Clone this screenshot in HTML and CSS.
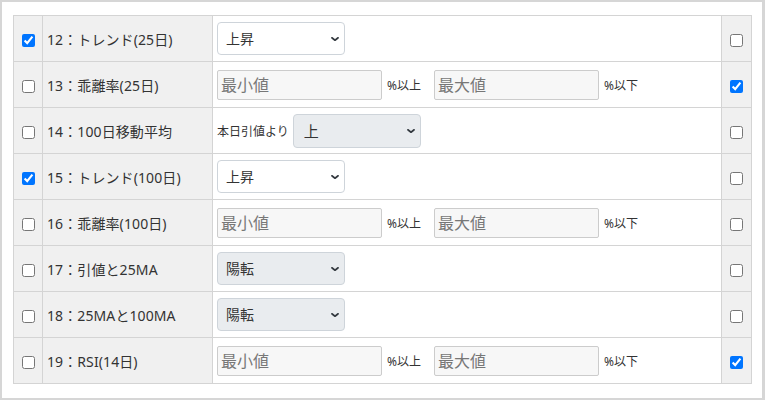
FILE: index.html
```html
<!DOCTYPE html>
<html lang="ja">
<head>
<meta charset="utf-8">
<link rel="stylesheet" href="styles.css">
</head>
<body>
<div class="frame">
<table class="grid">
<colgroup><col class="c1"><col class="c2"><col class="c3"><col class="c4"></colgroup>
<tr>
<td class="chk"><input type="checkbox" checked></td>
<td class="lbl">12：トレンド(25日)</td>
<td class="ctl"><select class="sel"><option>上昇</option></select></td>
<td class="chk"><input type="checkbox"></td>
</tr>
<tr>
<td class="chk"><input type="checkbox"></td>
<td class="lbl">13：乖離率(25日)</td>
<td class="ctl"><div class="range"><input class="num" placeholder="最小値"><span class="unit">%以上</span><input class="num" placeholder="最大値"><span class="unit">%以下</span></div></td>
<td class="chk"><input type="checkbox" checked></td>
</tr>
<tr>
<td class="chk"><input type="checkbox"></td>
<td class="lbl">14：100日移動平均</td>
<td class="ctl"><div class="range"><span class="pre">本日引値より</span><select class="sel dis big"><option>上</option></select></div></td>
<td class="chk"><input type="checkbox"></td>
</tr>
<tr>
<td class="chk"><input type="checkbox" checked></td>
<td class="lbl">15：トレンド(100日)</td>
<td class="ctl"><select class="sel"><option>上昇</option></select></td>
<td class="chk"><input type="checkbox"></td>
</tr>
<tr>
<td class="chk"><input type="checkbox"></td>
<td class="lbl">16：乖離率(100日)</td>
<td class="ctl"><div class="range"><input class="num" placeholder="最小値"><span class="unit">%以上</span><input class="num" placeholder="最大値"><span class="unit">%以下</span></div></td>
<td class="chk"><input type="checkbox"></td>
</tr>
<tr>
<td class="chk"><input type="checkbox"></td>
<td class="lbl">17：引値と25MA</td>
<td class="ctl"><select class="sel dis"><option>陽転</option></select></td>
<td class="chk"><input type="checkbox"></td>
</tr>
<tr>
<td class="chk"><input type="checkbox"></td>
<td class="lbl">18：25MAと100MA</td>
<td class="ctl"><select class="sel dis"><option>陽転</option></select></td>
<td class="chk"><input type="checkbox"></td>
</tr>
<tr>
<td class="chk"><input type="checkbox"></td>
<td class="lbl">19：RSI(14日)</td>
<td class="ctl"><div class="range"><input class="num" placeholder="最小値"><span class="unit">%以上</span><input class="num" placeholder="最大値"><span class="unit">%以下</span></div></td>
<td class="chk"><input type="checkbox" checked></td>
</tr>
</table>
</div>
</body>
</html>
```
FILE: styles.css
```css
html, body { margin: 0; padding: 0; background: #fff; }
body {
  font-family: "Noto Sans", "Noto Sans CJK JP", sans-serif;
  color: #333;
}
.frame {
  box-sizing: border-box;
  width: 765px;
  height: 400px;
  border: 2px solid #d6d6d6;
  border-right-width: 3px;
  padding: 13px 0 0 11px;
}
.grid {
  border-collapse: collapse;
  table-layout: fixed;
  width: 738px;
}
.c1 { width: 29px; }
.c2 { width: 170px; }
.c3 { width: 509px; }
.c4 { width: 30px; }
.grid td {
  border: 1px solid #d4d4d4;
  height: 45px;
  padding: 0;
  vertical-align: middle;
}
.chk { background: #f0f0f0; text-align: center; }
.chk input {
  width: 13px; height: 13px; margin: 0;
  accent-color: #0075ff;
  vertical-align: middle;
}
.lbl {
  background: #f0f0f0;
  font-size: 14px;
  letter-spacing: 0.1px;
  padding-left: 4px !important;
  white-space: nowrap;
}
.ctl { padding-left: 4px !important; }
.range { display: flex; align-items: center; }
.sel {
  appearance: none;
  -webkit-appearance: none;
  box-sizing: border-box;
  width: 128px;
  height: 33px;
  border: 1px solid #ced4da;
  border-radius: 4px;
  background: #fff url("data:image/svg+xml,%3Csvg xmlns='http://www.w3.org/2000/svg' viewBox='0 0 16 16'%3E%3Cpath fill='none' stroke='%23343a40' stroke-linecap='round' stroke-linejoin='round' stroke-width='2.6' d='M3 6l5 4 5-4'/%3E%3C/svg%3E") no-repeat right 4px center / 10px 10px;
  font-family: inherit;
  font-size: 14px;
  color: #333;
  padding: 0 24px 0 8px;
  display: block;
}
.sel.dis { background-color: #e9ecef; }
.sel.big { font-size: 15px; height: 34px; padding-left: 10px; }
.num {
  box-sizing: border-box;
  width: 165px;
  height: 30px;
  border: 1px solid #ccc;
  border-radius: 2px;
  background: #f7f7f7;
  font-family: inherit;
  font-size: 16px;
  padding: 0 3px;
  color: #333;
}
.num::placeholder { color: #777; }
.unit {
  font-size: 12px;
  margin: 0 13px 0 5px;
}
.pre {
  font-size: 12px;
  margin-right: 4px;
}
```
